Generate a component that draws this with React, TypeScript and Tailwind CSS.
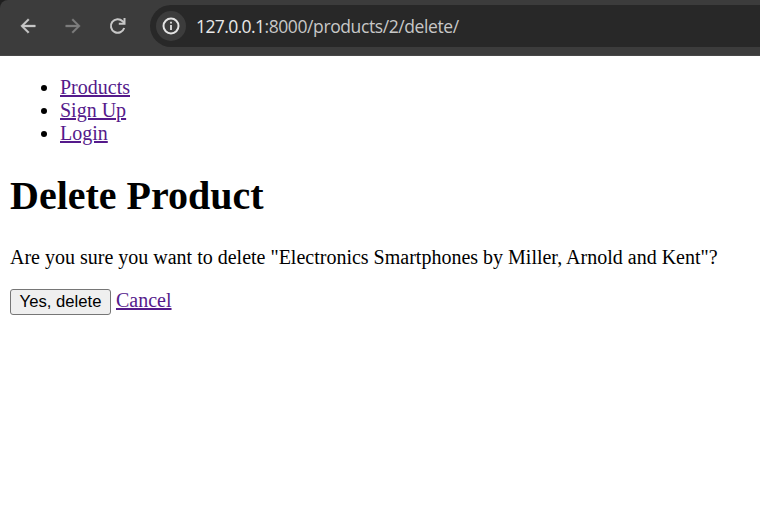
const links = ['Products', 'Sign Up', 'Login'];

function BackIcon() {
  return (
    <svg width="22" height="22" viewBox="0 0 24 24" fill="#c7c7c7" stroke="#c7c7c7" strokeWidth="0.4">
      <path d="M20 11H7.83l5.59-5.59L12 4l-8 8 8 8 1.41-1.41L7.83 13H20z" />
    </svg>
  );
}

function ForwardIcon() {
  return (
    <svg width="22" height="22" viewBox="0 0 24 24" fill="#7d7d7d" stroke="#7d7d7d" strokeWidth="0.4">
      <path d="M12 4l-1.41 1.41L16.17 11H4v2h12.17l-5.58 5.59L12 20l8-8z" />
    </svg>
  );
}

function ReloadIcon() {
  return (
    <svg width="22" height="22" viewBox="0 0 22 22" fill="none" stroke="#c7c7c7" strokeWidth="2">
      <path d="M17.2 13A6.8 6.8 0 1 1 15.6 6.2L17.4 8" />
      <path d="M17.5 3v5.7h-5.7" />
    </svg>
  );
}

function InfoIcon() {
  return (
    <svg width="18" height="18" viewBox="0 0 18 18" fill="none">
      <circle cx="9" cy="9" r="7.5" stroke="#e3e3e3" strokeWidth="2" />
      <path d="M9 8v5M9 4.8v1.8" stroke="#e3e3e3" strokeWidth="1.8" />
    </svg>
  );
}

export default function App() {
  return (
    <div className="h-[507px] w-[760px] overflow-hidden bg-white text-black">
      <header className="bg-[#1f1f1f]">
        <div className="flex h-14 items-start overflow-hidden rounded-tl-[8px] border-b border-[#474747] bg-[#3c3c3c]">
          <div className="mt-[15px] ml-[16.5px] flex w-[133.5px] shrink-0 gap-[23px]">
            <BackIcon />
            <ForwardIcon />
            <ReloadIcon />
          </div>
          <div className="mt-[5px] flex h-[42px] flex-1 items-center rounded-l-full bg-[#282828] pl-[6px]">
            <span className="flex h-[30px] w-[30px] items-center justify-center rounded-full bg-[#3c3c3c]">
              <InfoIcon />
            </span>
            <span className="ml-[10px] font-['Open_Sans',sans-serif] text-[17.5px] leading-[24px] whitespace-nowrap text-[#c7c7c7]">
              <span className="tracking-[-0.6px] text-[#e8e8e8]">127.0.0.1</span>
              <span className="tracking-[-0.4px]">:8000/products/2/delete/</span>
            </span>
          </div>
        </div>
      </header>
      <main className="px-[10px] pt-[20px] font-['Liberation_Serif',serif] text-[20px] leading-[23px]">
        <ul className="pl-[31px]">
          {links.map((label) => (
            <li key={label} className="flex items-start gap-[13px]">
              <span className="mt-[9px] h-[6px] w-[6px] rounded-full bg-black" />
              <a href="#" className="text-[#551a8b] underline decoration-2">{label}</a>
            </li>
          ))}
        </ul>
        <h1 className="mt-[28px] text-[40px] leading-[46px] font-bold">Delete Product</h1>
        <p className="mt-[27px] whitespace-nowrap">
          Are you sure you want to delete "Electronics Smartphones by Miller, Arnold and Kent"?
        </p>
        <form className="mt-[20px] flex items-start gap-[5px]">
          <button
            type="button"
            className="h-[26px] w-[101px] rounded-[3px] border border-[#767676] bg-[#efefef] font-['Liberation_Sans',sans-serif] text-[16.667px] leading-[22px] whitespace-nowrap"
          >
            Yes, delete
          </button>
          <a href="#" className="text-[#551a8b] underline decoration-2">Cancel</a>
        </form>
      </main>
    </div>
  );
}
